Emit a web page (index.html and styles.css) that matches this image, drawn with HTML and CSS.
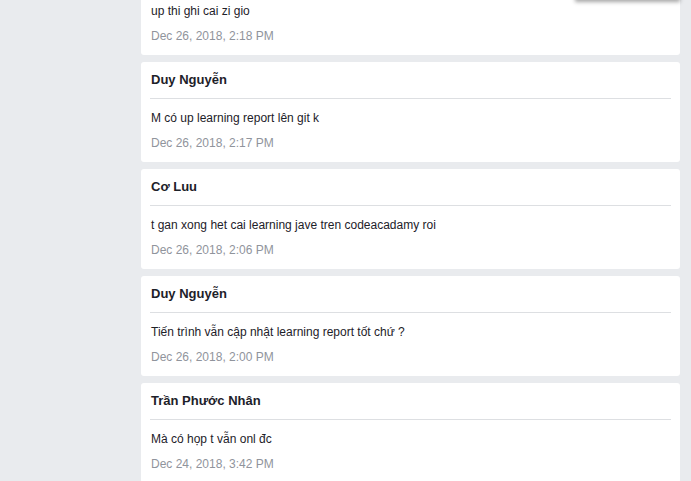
FILE: index.html
```html
<!DOCTYPE html>
<html lang="vi">
<head>
<meta charset="utf-8">
<title>Messages</title>
<link rel="stylesheet" href="styles.css">
</head>
<body>
<div class="menu-shadow"></div>
<main class="feed">
  <article class="card">
    <h3 class="name">Cơ Luu</h3>
    <p class="msg">up thi ghi cai zi gio</p>
    <p class="date">Dec 26, 2018, 2:18 PM</p>
  </article>
  <article class="card">
    <h3 class="name">Duy Nguyễn</h3>
    <p class="msg">M có up learning report lên git k</p>
    <p class="date">Dec 26, 2018, 2:17 PM</p>
  </article>
  <article class="card">
    <h3 class="name">Cơ Luu</h3>
    <p class="msg">t gan xong het cai learning jave tren codeacadamy roi</p>
    <p class="date">Dec 26, 2018, 2:06 PM</p>
  </article>
  <article class="card">
    <h3 class="name">Duy Nguyễn</h3>
    <p class="msg">Tiến trình vẫn cập nhật learning report tốt chứ ?</p>
    <p class="date">Dec 26, 2018, 2:00 PM</p>
  </article>
  <article class="card">
    <h3 class="name">Trần Phước Nhân</h3>
    <p class="msg">Mà có họp t vẫn onl đc</p>
    <p class="date">Dec 24, 2018, 3:42 PM</p>
  </article>
</main>
</body>
</html>
```
FILE: styles.css
```css
html, body {
  margin: 0;
  padding: 0;
  background: #e9ebee;
  overflow: hidden;
  font-family: "Liberation Sans", Arial, sans-serif;
  color: #1d2129;
}
.feed {
  margin: -45px 0 0 141px;
  width: 539px;
  display: flex;
  flex-direction: column;
  gap: 7px;
}
.card {
  background: #fff;
  border-radius: 3px;
  height: 100px;
  box-sizing: border-box;
  padding: 9px 9px 0 9px;
}
.name {
  margin: 0;
  font-size: 13px;
  font-weight: bold;
  line-height: 18px;
  padding: 0 1px 9px;
  border-bottom: 1px solid #dddfe2;
}
.msg {
  margin: 11px 0 0;
  padding: 0 1px;
  font-size: 12px;
  line-height: 16px;
}
.date {
  margin: 9px 0 0;
  padding: 0 1px;
  font-size: 12px;
  line-height: 16px;
  color: #90949c;
}
.menu-shadow {
  position: absolute;
  top: -60px;
  left: 575px;
  width: 105px;
  height: 60px;
  background: #fff;
  box-shadow: 0 2px 4px rgba(0, 0, 0, 0.35);
  z-index: 2;
}
```
